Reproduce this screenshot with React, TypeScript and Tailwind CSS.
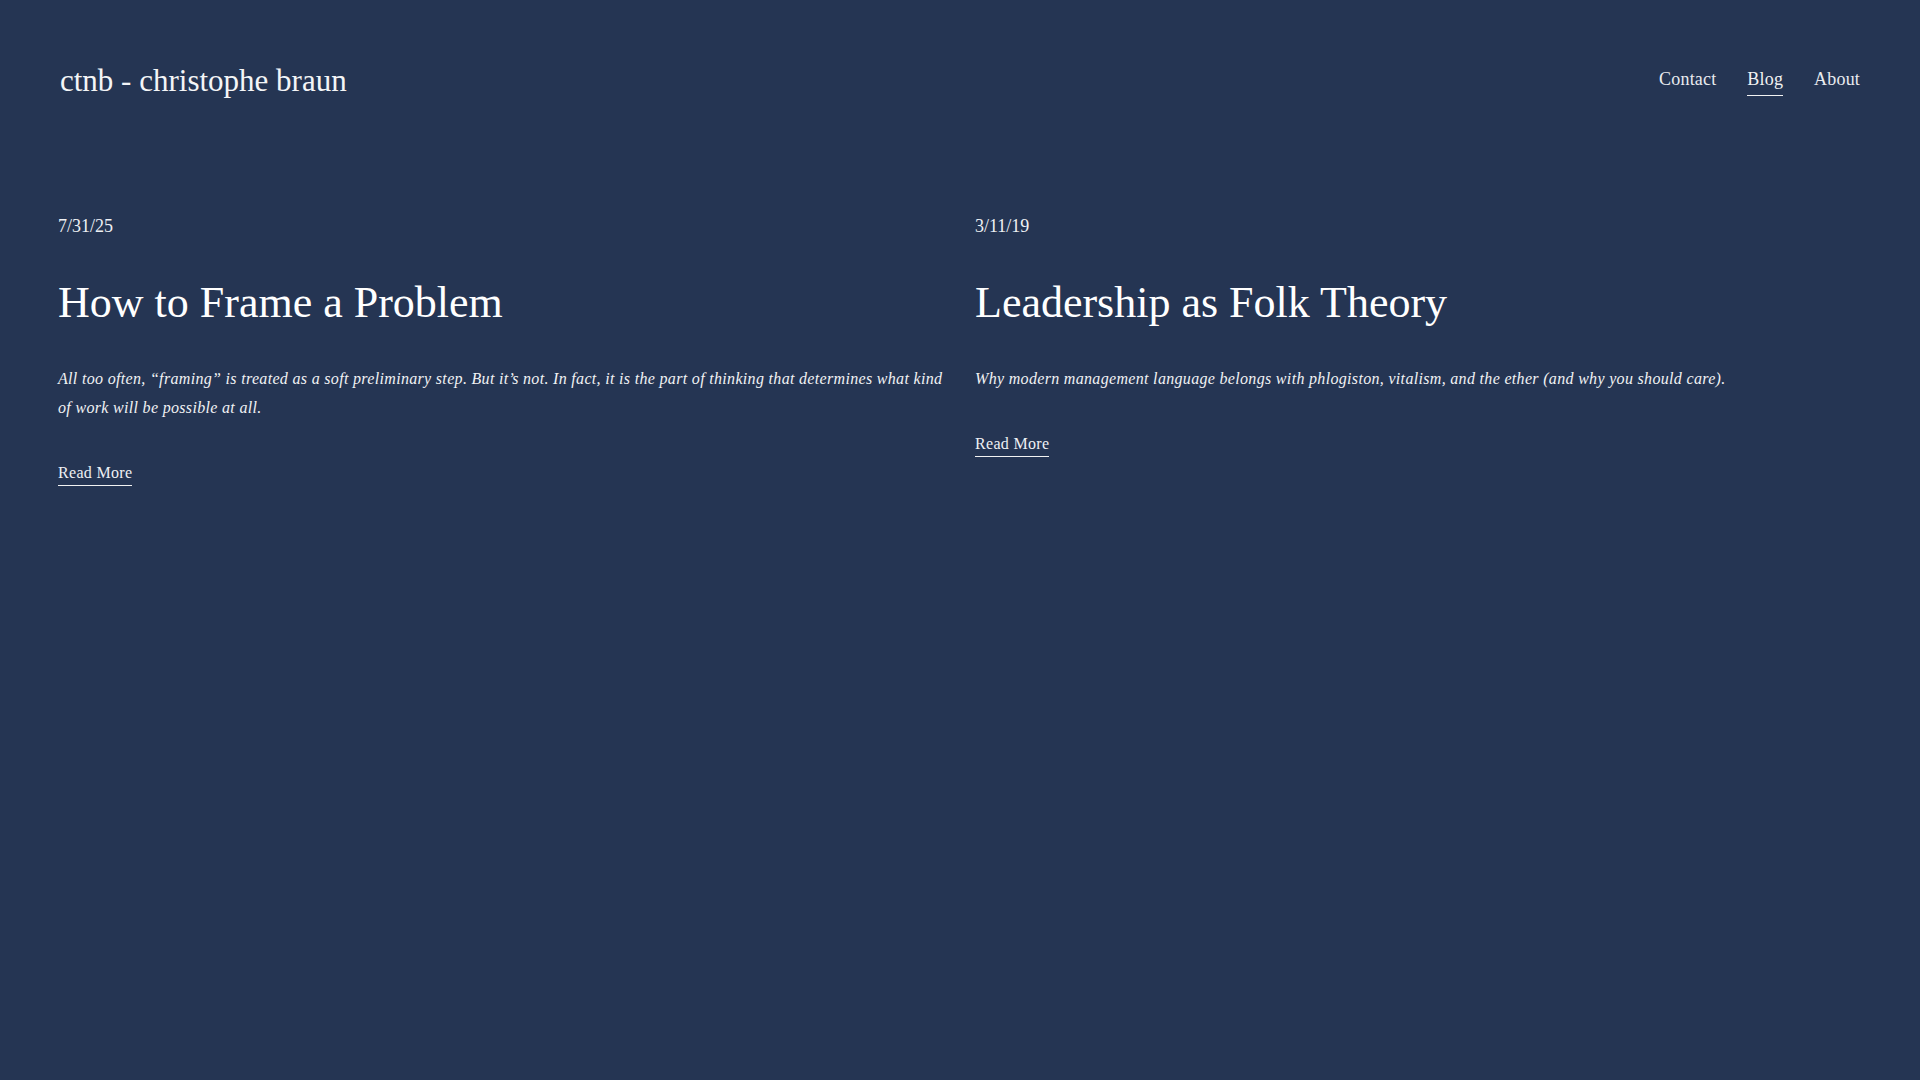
import React from 'react';

interface Post {
  date: string;
  title: string;
  excerpt: string;
}

const posts: Post[] = [
  {
    date: '7/31/25',
    title: 'How to Frame a Problem',
    excerpt:
      'All too often, \u201cframing\u201d is treated as a soft preliminary step. But it\u2019s not. In fact, it is the part of thinking that determines what kind of work will be possible at all.',
  },
  {
    date: '3/11/19',
    title: 'Leadership as Folk Theory',
    excerpt:
      'Why modern management language belongs with phlogiston, vitalism, and the ether (and why you should care).',
  },
];

const navItems = ['Contact', 'Blog', 'About'];

const NavLink: React.FC<{ label: string; active?: boolean }> = ({ label, active }) => (
  <a
    href="#"
    className={`block text-[18px] leading-[24px] tracking-[0.01em] pb-[4px] border-b ${
      active ? 'border-[#f2f2f2] text-[#f2f2f2]' : 'border-transparent text-[#e9ebef]'
    }`}
  >
    {label}
  </a>
);

const PostCard: React.FC<{ post: Post }> = ({ post }) => (
  <article className="flex flex-col items-start">
    <div className="text-[18px] leading-[24px] text-[#eef0f3]">{post.date}</div>
    <h2 className="mt-[39px] text-[44px] leading-[52px] font-normal text-white">{post.title}</h2>
    <p className="mt-[35px] text-[16px] leading-[29px] italic tracking-[0.02em] text-[#f1f2f4]">
      {post.excerpt}
    </p>
    <a
      href="#"
      className="mt-[41px] block text-[16px] leading-[20px] tracking-[0.02em] pb-[2px] border-b border-[#f2f2f2] text-[#eef0f3]"
    >
      Read More
    </a>
  </article>
);

export default function App() {
  return (
    <div className="min-h-screen bg-[#253553] text-white font-['Liberation_Serif','Times_New_Roman',serif]">
      <header className="flex items-start justify-between pt-[61px] pl-[60px] pr-[60px]">
        <a href="#" className="block text-[31px] leading-[40px] text-[#f4f5f7]">
          ctnb - christophe braun
        </a>
        <nav className="mt-[6px] flex items-start gap-[31px]">
          {navItems.map((item) => (
            <NavLink key={item} label={item} active={item === 'Blog'} />
          ))}
        </nav>
      </header>

      <main className="pt-[113px] px-[58px]">
        <div className="grid grid-cols-2 gap-x-[30px]">
          {posts.map((post) => (
            <PostCard key={post.title} post={post} />
          ))}
        </div>
      </main>
    </div>
  );
}
